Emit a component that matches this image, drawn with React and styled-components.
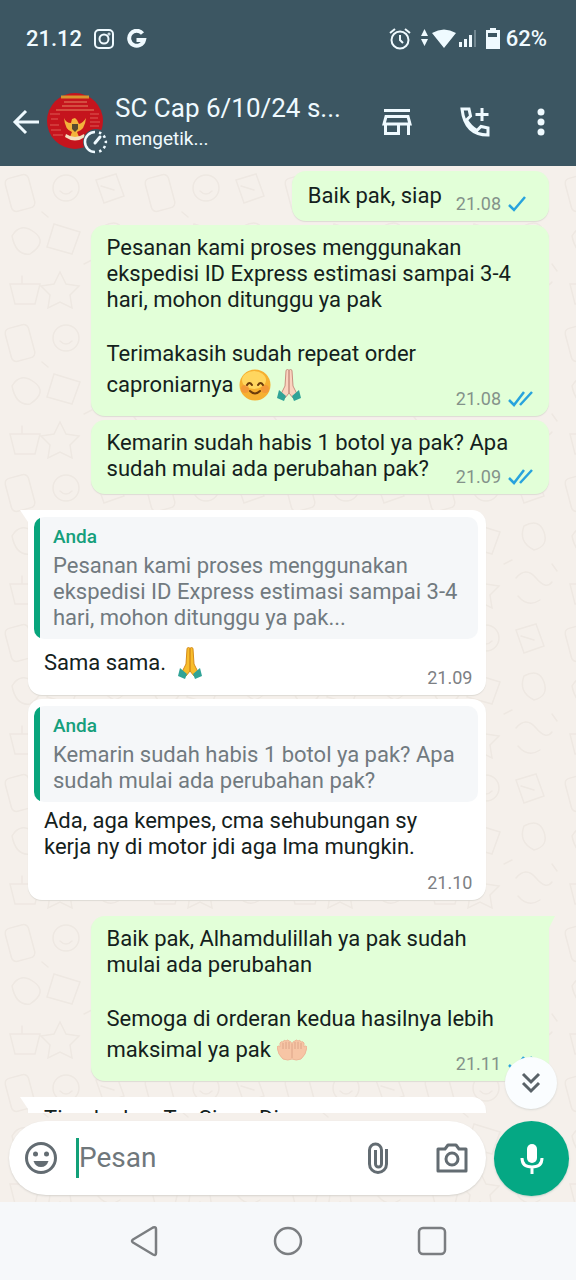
import React from "react";
import styled, { createGlobalStyle, css } from "styled-components";

const GlobalStyle = createGlobalStyle`
  *, *::before, *::after { box-sizing: border-box; }
  body { margin: 0; font-family: Roboto, "Liberation Sans", sans-serif; }
  p { margin: 0; }
`;

const Screen = styled.div`
  display: flex;
  flex-direction: column;
  height: 100vh;
  overflow: hidden;
  background: #f6f8fa;
`;

const Header = styled.header`
  flex: none;
  background: #3c5662;
  color: #effaff;
`;

const StatusBar = styled.div`
  display: flex;
  align-items: center;
  justify-content: space-between;
  height: 78px;
  padding: 0 29px 0 26px;
  font-size: 22px;
  font-weight: 500;
  line-height: 26px;
`;

const StatusGroup = styled.div`
  display: flex;
  align-items: center;
  gap: ${(p) => p.$gap}px;
`;

const AppBar = styled.div`
  display: flex;
  align-items: center;
  height: 88px;
  padding: 0 27px 0 12px;
`;

const IconButton = styled.button`
  display: flex;
  flex: none;
  align-items: center;
  justify-content: ${(p) => (p.$start ? "flex-start" : "center")};
  width: ${(p) => p.$width || 40}px;
  height: 48px;
  padding: 0;
  border: 0;
  background: none;
  color: inherit;
`;

const Contact = styled.div`
  flex: 1;
  min-width: 0;
  padding-left: 8px;
`;

const ContactName = styled.h1`
  margin: 0;
  overflow: hidden;
  font-size: 26px;
  font-weight: 400;
  line-height: 34px;
  white-space: nowrap;
`;

const ContactState = styled.p`
  font-size: 19px;
  line-height: 28px;
`;

const Actions = styled.div`
  display: flex;
  align-items: center;
  gap: 38px;
`;

const Conversation = styled.main`
  position: relative;
  display: flex;
  flex: 1;
  flex-direction: column;
  min-height: 0;
  background: #f5f0eb;
`;

const Wallpaper = styled.svg`
  position: absolute;
  inset: 0;
  width: 100%;
  height: 100%;
`;

const Messages = styled.div`
  position: relative;
  display: flex;
  flex: 1;
  flex-direction: column;
  gap: 4px;
  min-height: 0;
  overflow: hidden;
  padding: 5px 27px 0 28px;
`;

const tail = css`
  border-top-${(p) => (p.$sent ? "right" : "left")}-radius: 0;
  &::before {
    content: "";
    position: absolute;
    top: 0;
    ${(p) => (p.$sent ? "right: -6px;" : "left: -8px;")}
    width: ${(p) => (p.$sent ? 6 : 8)}px;
    height: 12px;
    background: inherit;
    clip-path: ${(p) => (p.$sent ? "polygon(0 0, 100% 0, 0 100%)" : "polygon(0 0, 100% 0, 100% 100%)")};
  }
`;

const Bubble = styled.article`
  position: relative;
  display: flex;
  flex: none;
  flex-direction: column;
  align-self: ${(p) => (p.$sent ? "flex-end" : "flex-start")};
  width: ${(p) => (p.$short ? "auto" : "88%")};
  margin-top: ${(p) => (p.$turn ? 12 : 0)}px;
  padding: ${(p) => (p.$sent ? "10px 15px 6px 16px" : p.$plain ? "9px 8px 6px 6px" : "7px 8px 6px 6px")};
  border-radius: 14px;
  background: ${(p) => (p.$sent ? "#e2ffd8" : "#ffffff")};
  box-shadow: 0 1px 1px #dedbd5;
  color: #14211c;
  font-size: 22px;
  line-height: 26px;
  ${(p) => p.$turn && tail}
`;

const ShortRow = styled.div`
  display: flex;
  align-items: flex-end;
  gap: 14px;
  padding-top: 2px;
`;

const Paragraph = styled.p`
  padding: 0 ${(p) => (p.$inset ? 10 : 0)}px ${(p) => (p.$raised ? 6 : 0)}px;
  & + & { margin-top: 28px; }
`;

const EmojiLine = styled.span`
  display: flex;
  align-items: center;
  gap: 6px;
  min-height: 36px;
`;

const Meta = styled.div`
  display: flex;
  align-items: center;
  align-self: flex-end;
  gap: 7px;
  margin-top: ${(p) => (p.$rise ? -p.$rise : 0)}px;
  padding-right: ${(p) => (p.$received ? 6 : 0)}px;
  color: ${(p) => (p.$received ? "#7d8084" : "#84928a")};
  font-size: 18px;
  line-height: 22px;
`;

const Quote = styled.blockquote`
  margin: 0 0 6px;
  padding: 6px 12px 8px 19px;
  border-radius: 10px;
  background: linear-gradient(to right, #08a57c 6px, #f5f7f9 6px);
  color: #717a80;
`;

const QuoteAuthor = styled.cite`
  display: block;
  margin-bottom: 2px;
  color: #159f7c;
  font-size: 19px;
  font-style: normal;
  font-weight: 500;
  line-height: 28px;
`;

const JumpButton = styled.button`
  position: absolute;
  right: 19px;
  bottom: 4px;
  display: flex;
  align-items: center;
  justify-content: center;
  width: 52px;
  height: 52px;
  padding: 0;
  border: 0;
  border-radius: 50%;
  background: #fafdff;
  box-shadow: 0 1px 2px #d8d8d4;
`;

const MessageArea = styled.div`
  position: relative;
  display: flex;
  flex: 1;
  min-height: 0;
`;

const Composer = styled.form`
  position: relative;
  display: flex;
  flex: none;
  gap: 8px;
  padding: 8px 7px 6px 9px;
`;

const InputShell = styled.label`
  display: flex;
  flex: 1;
  align-items: center;
  min-width: 0;
  height: 74px;
  padding: 0 14px 0 12px;
  border-radius: 37px;
  background: #ffffff;
  box-shadow: 0 1px 2px #d5d2cd;
  color: #636c72;
`;

const Caret = styled.span`
  flex: none;
  width: 3px;
  height: 40px;
  margin-left: 15px;
  background: #12a078;
`;

const TextInput = styled.input`
  flex: 1;
  min-width: 0;
  padding: 0;
  border: 0;
  outline: 0;
  background: none;
  color: #636c72;
  font: 400 28px/36px Roboto, "Liberation Sans", sans-serif;
  &::placeholder { color: #6f777b; opacity: 1; }
`;

const InputTools = styled.div`
  display: flex;
  gap: 34px;
`;

const MicButton = styled.button`
  display: flex;
  flex: none;
  align-items: center;
  justify-content: center;
  width: 75px;
  height: 75px;
  padding: 0;
  border: 0;
  border-radius: 50%;
  background: #05a884;
  box-shadow: 0 1px 2px #c4d2cc;
`;

const SystemNav = styled.nav`
  display: flex;
  flex: none;
  align-items: center;
  justify-content: center;
  gap: 104px;
  height: 78px;
  color: #7b7e81;
`;

const stroke = (width) => ({
  fill: "none",
  stroke: "currentColor",
  strokeWidth: width,
  strokeLinecap: "round",
  strokeLinejoin: "round",
});

const Ticks = ({ single }) => (
  <svg width="26" height="20" viewBox="0 0 26 20" fill="none" stroke="#28a3dd" strokeWidth="2.5" aria-label="Dibaca">
    {single ? <path d="M1 11l5 5L17 3" /> : <path d="M1 11l5 5L16 3M12 16L24 3" />}
  </svg>
);

const SmileEmoji = () => (
  <svg width="32" height="32" viewBox="0 0 32 32" role="img" aria-label="tersenyum">
    <circle cx="16" cy="16" r="15.500" fill="#f6b030" />
    <ellipse cx="15" cy="11" rx="12" ry="9" fill="#ffd65f" />
    <circle cx="6" cy="20" r="4" fill="#f28b3c" opacity=".6" />
    <circle cx="26" cy="20" r="4" fill="#f28b3c" opacity=".6" />
    <path d="M8 16q2.500-4 5 0M19 16q2.500-4 5 0M11 22q5 5 10 0" fill="none" stroke="#6b3b0b" strokeWidth="2" strokeLinecap="round" />
  </svg>
);

const PrayEmoji = ({ skin, edge }) => (
  <svg width="24" height="32" viewBox="0 0 24 32" role="img" aria-label="tangan berdoa">
    <path d="M9 2q0-1.500 1.500-1.500T12 2v22l-4 5-4-4 4-8zM15 2q0-1.500-1.500-1.500T12 2v22l4 5 4-4-4-8z" fill={skin} stroke={edge} />
    <path d="M2 21l7 6-2 5-7-3zM22 21l-7 6 2 5 7-3z" fill="#31a397" />
  </svg>
);

const PalmsEmoji = () => (
  <svg width="30" height="24" viewBox="0 0 30 24" role="img" aria-label="telapak tangan">
    <path d="M15 21q-4 2-9 0Q1 17 0 9q1-2 3 0V5q1-2 3-1 1-3 3-1 2-2 3 0 2 0 3 3 1-3 3-3 1-2 3 0 2-2 3 1 2-1 3 1v4q2-2 3 0-1 8-6 12-5 2-9 0z" fill="#f7c5a5" stroke="#edb798" />
    <path d="M6 5v6M9 4v7M12 4v7M24 5v6M21 4v7M18 4v7M15 6v14" fill="none" stroke="#dda488" />
  </svg>
);

const Avatar = () => (
  <svg width="60" height="60" viewBox="0 0 60 60" overflow="visible" role="img" aria-label="Foto profil">
    <circle cx="28" cy="29" r="28" fill="#c5141d" />
    <path d="M14 5h28" stroke="#d8942f" strokeWidth="3" />
    <path d="M17 10h23M15 14h26M9 18h38" stroke="#d9604c" strokeWidth="1.500" />
    <path d="M3 22h10M4 27h7M3 33h9M4 38h10M6 43h10M43 22h9M43 26h8M43 30h10M43 34h9" stroke="#dd5a55" />
    <path d="M17 26q1 12 8 14l-2 5h9l-2-5q8-2 9-14-3 5-7 6l-2-4-2-2-3 1-1 4q-5 0-7-5z" fill="#f3b33b" />
    <path d="M25 32h6v5l-3 3-3-3z" fill="#574b2f" />
    <path d="M19 42q9 6 18 0l1 3q-10 7-20 0z" fill="#f4dfc0" />
    <circle cx="49" cy="50" r="13" fill="#3c5662" />
    <path d="M48 40a10 10 0 0 0 0 20" fill="none" stroke="#effaff" strokeWidth="2.500" />
    <path d="M52 40.500a10 10 0 0 1 0 19" fill="none" stroke="#effaff" strokeWidth="2.500" strokeDasharray="2.500 3" />
    <path d="M48 51l5-6" stroke="#effaff" strokeWidth="3" strokeLinecap="round" />
  </svg>
);

const Doodles = () => (
  <Wallpaper aria-hidden="true">
    <defs>
      <pattern id="doodles" width="140" height="150" patternUnits="userSpaceOnUse">
        <g fill="none" stroke="#eee8e2" strokeWidth="1.500" strokeLinecap="round">
          <rect x="8" y="10" width="24" height="34" rx="5" transform="rotate(-15 20 27)" />
          <circle cx="66" cy="22" r="13" />
          <path d="M60 25q6 6 12 0M96 14l20-6 8 22-20 7zM101 20l13 4M12 70q8-14 22-4t-4 22q-14 2-18-18M54 58l26 8-8 22-25-7zM104 60q15-8 20 6t-10 18q-16-8-10-24M10 118h30l-5 20H15zM22 110v8M60 106l6 12 13 2-9 9 2 13-12-6-12 6 2-13-9-9 13-2zM96 112q10-12 20 0t16 4M98 130q10 12 22 4M42 46l6 5M84 98l8-4M132 98l5 7" />
        </g>
      </pattern>
    </defs>
    <rect width="100%" height="100%" fill="url(#doodles)" />
  </Wallpaper>
);

const StatusIcons = () => (
  <svg width="112" height="24" viewBox="0 0 112 24" fill="currentColor" aria-hidden="true">
    <g fill="none" stroke="currentColor" strokeWidth="2">
      <circle cx="11" cy="13" r="8.500" />
      <path d="M11 8v5l3 3M1 6l5-4M21 6l-5-4" />
    </g>
    <path d="M35.500 2l3.500 7h-7zM35.500 19l3.500-7h-7zM43 6Q55-1 67 6L55 21z" />
    <path d="M70 15h3v5h-3zM75 12h3v8h-3zM80 8h3v12h-3z" />
    <path d="M85 3h2v17h-2z" opacity=".3" />
    <path fillRule="evenodd" d="M101 1h6v2h4v19H97V3h4zM99 6v4h9V6z" />
  </svg>
);

export default function App() {
  return (
    <Screen>
      <GlobalStyle />
      <Header>
        <StatusBar>
          <StatusGroup $gap={12}>
            <time>21.12</time>
            <svg width="20" height="20" viewBox="0 0 20 20" {...stroke(2)} aria-label="Instagram">
              <rect x="1" y="1" width="18" height="18" rx="4" />
              <circle cx="10" cy="10" r="4.500" />
              <circle cx="15" cy="5" r=".5" />
            </svg>
            <svg width="30" height="20" viewBox="0 0 30 20" fill="none" stroke="currentColor" strokeWidth="4" aria-label="Google">
              <path d="M16.500 4.500A7.500 7.500 0 1 0 18 11H10.500" />
            </svg>
          </StatusGroup>
          <StatusGroup $gap={5}>
            <StatusIcons />
            <span>62%</span>
          </StatusGroup>
        </StatusBar>
        <AppBar>
          <IconButton $width={35} $start aria-label="Kembali">
            <svg width="28" height="28" viewBox="0 0 28 28" {...stroke(3)} strokeLinecap="butt" strokeLinejoin="miter">
              <path d="M27 14H4M14 3L3 14l11 11" />
            </svg>
          </IconButton>
          <Avatar />
          <Contact>
            <ContactName>SC Cap 6/10/24 s...</ContactName>
            <ContactState>mengetik...</ContactState>
          </Contact>
          <Actions>
            <IconButton aria-label="Katalog">
              <svg width="30" height="28" viewBox="0 0 30 28" fill="none" stroke="currentColor" strokeWidth="3">
                <path d="M2 2.500h26M4 8.500h22L28 16H2zM3.500 16v9.500h13V16M26.500 16v11" />
              </svg>
            </IconButton>
            <IconButton aria-label="Panggil">
              <svg width="30" height="30" viewBox="0 0 30 30" fill="none" stroke="currentColor" strokeWidth="3">
                <path d="M2 2h7l1.500 7-4 4q4 7 10.500 10.500l4-4L28 21v7Q5 28 2 2zM22 1v13M15.500 7.500h13" />
              </svg>
            </IconButton>
            <IconButton $width={16} aria-label="Menu lain">
              <svg width="8" height="28" viewBox="0 0 8 28" fill="currentColor">
                <circle cx="4" cy="4" r="3.500" />
                <circle cx="4" cy="14" r="3.500" />
                <circle cx="4" cy="24" r="3.500" />
              </svg>
            </IconButton>
          </Actions>
        </AppBar>
      </Header>

      <Conversation>
        <Doodles />
        <MessageArea>
          <Messages>
            <Bubble $sent $short>
              <ShortRow>
                <Paragraph $raised>Baik pak, siap</Paragraph>
                <Meta><time>21.08</time><Ticks single /></Meta>
              </ShortRow>
            </Bubble>
            <Bubble $sent>
              <Paragraph>
                Pesanan kami proses menggunakan<br />ekspedisi ID Express estimasi sampai 3-4<br />hari, mohon ditunggu ya pak
              </Paragraph>
              <Paragraph>
                Terimakasih sudah repeat order
                <EmojiLine>caproniarnya <SmileEmoji /> <PrayEmoji skin="#fbd3bf" edge="#c98f80" /></EmojiLine>
              </Paragraph>
              <Meta $rise={15}><time>21.08</time><Ticks /></Meta>
            </Bubble>
            <Bubble $sent>
              <Paragraph>Kemarin sudah habis 1 botol ya pak? Apa<br />sudah mulai ada perubahan pak?</Paragraph>
              <Meta $rise={16}><time>21.09</time><Ticks /></Meta>
            </Bubble>
            <Bubble $turn>
              <Quote>
                <QuoteAuthor>Anda</QuoteAuthor>
                <p>Pesanan kami proses menggunakan<br />ekspedisi ID Express estimasi sampai 3-4<br />hari, mohon ditunggu ya pak...</p>
              </Quote>
              <Paragraph $inset>
                <EmojiLine>Sama sama.{"\u00a0"}<PrayEmoji skin="#f8bd2c" edge="#d58c19" /></EmojiLine>
              </Paragraph>
              <Meta $rise={14} $received><time>21.09</time></Meta>
            </Bubble>
            <Bubble>
              <Quote>
                <QuoteAuthor>Anda</QuoteAuthor>
                <p>Kemarin sudah habis 1 botol ya pak? Apa<br />sudah mulai ada perubahan pak?</p>
              </Quote>
              <Paragraph $inset>Ada, aga kempes, cma sehubungan sy<br />kerja ny di motor jdi aga lma mungkin.</Paragraph>
              <Meta $rise={-12} $received><time>21.10</time></Meta>
            </Bubble>
            <Bubble $sent $turn>
              <Paragraph>Baik pak, Alhamdulillah ya pak sudah<br />mulai ada perubahan</Paragraph>
              <Paragraph>
                Semoga di orderan kedua hasilnya lebih
                <EmojiLine>maksimal ya pak<PalmsEmoji /></EmojiLine>
              </Paragraph>
              <Meta $rise={15}><time>21.11</time><Ticks /></Meta>
            </Bubble>
            <Bubble $turn $plain>
              <Paragraph $inset>Timalankan Tn. Sinan Di</Paragraph>
            </Bubble>
          </Messages>
          <JumpButton aria-label="Ke pesan terbaru">
            <svg width="20" height="22" viewBox="0 0 20 22" fill="none" stroke="#596268" strokeWidth="3">
              <path d="M2 2l8 8 8-8M2 11l8 8 8-8" />
            </svg>
          </JumpButton>
        </MessageArea>
        <Composer onSubmit={(e) => e.preventDefault()}>
          <InputShell>
            <IconButton type="button" aria-label="Emoji">
              <svg width="32" height="32" viewBox="0 0 32 32" fill="currentColor">
                <circle cx="16" cy="16" r="14.500" fill="none" stroke="currentColor" strokeWidth="3" />
                <circle cx="10.500" cy="12" r="2.500" />
                <circle cx="21.500" cy="12" r="2.500" />
                <path d="M8.500 19h15q-2 6-7.500 6t-7.500-6z" />
              </svg>
            </IconButton>
            <Caret />
            <TextInput type="text" placeholder="Pesan" aria-label="Pesan" />
            <InputTools>
              <IconButton type="button" aria-label="Lampirkan">
                <svg width="22" height="32" viewBox="0 0 22 32" {...stroke(3)} strokeLinecap="butt">
                  <path d="M19.500 7v15a8.500 8.500 0 0 1-17 0V8a6 6 0 0 1 12 0v14a3 3 0 0 1-6 0V8" />
                </svg>
              </IconButton>
              <IconButton type="button" aria-label="Kamera">
                <svg width="32" height="30" viewBox="0 0 32 30" {...stroke(3)}>
                  <path d="M2 6h7l3-4h8l3 4h7v22H2z" />
                  <circle cx="16" cy="16" r="6" />
                </svg>
              </IconButton>
            </InputTools>
          </InputShell>
          <MicButton type="button" aria-label="Rekam suara">
            <svg width="24" height="32" viewBox="0 0 24 32" fill="none" stroke="#fff" strokeWidth="3">
              <rect x="7" y="1" width="10" height="19" rx="5" fill="#fff" stroke="none" />
              <path d="M2 15q0 9 10 9t10-9M12 24v7" />
            </svg>
          </MicButton>
        </Composer>
      </Conversation>

      <SystemNav>
        <IconButton aria-label="Navigasi kembali">
          <svg width="28" height="32" viewBox="0 0 28 32" {...stroke(2.5)}>
            <path d="M3 14.500L23 2.500Q26 1.500 26 4v24q0 3-3 1.500L3 17.500q-2-1.500 0-3z" />
          </svg>
        </IconButton>
        <IconButton aria-label="Beranda">
          <svg width="30" height="30" viewBox="0 0 30 30" {...stroke(2.5)}><circle cx="15" cy="15" r="13" /></svg>
        </IconButton>
        <IconButton aria-label="Aplikasi terbaru">
          <svg width="30" height="30" viewBox="0 0 30 30" {...stroke(2.5)}><rect x="2" y="2" width="26" height="26" rx="4" /></svg>
        </IconButton>
      </SystemNav>
    </Screen>
  );
}
